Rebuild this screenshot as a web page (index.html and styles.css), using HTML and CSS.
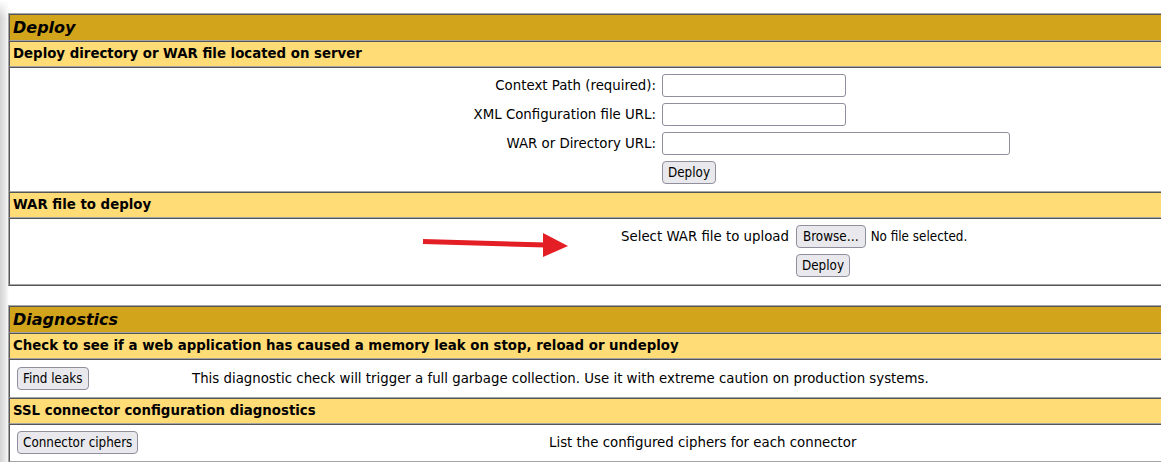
FILE: index.html
```html
<!DOCTYPE html>
<html lang="en">
<head>
<meta charset="utf-8">
<title>Manager</title>
<link rel="stylesheet" href="styles.css">
</head>
<body>
<div class="page">
  <section class="panel">
    <div class="cell title">Deploy</div>
    <div class="cell header">Deploy directory or WAR file located on server</div>
    <div class="cell body server-body">
      <form class="form-grid server-form">
        <label class="lbl">Context Path (required):</label>
        <div><input class="txt" type="text"></div>
        <label class="lbl">XML Configuration file URL:</label>
        <div><input class="txt" type="text"></div>
        <label class="lbl">WAR or Directory URL:</label>
        <div><input class="txt long" type="text"></div>
        <span></span>
        <div><button type="button" class="btn">Deploy</button></div>
      </form>
    </div>
    <div class="cell header">WAR file to deploy</div>
    <div class="cell body upload-body">
      <form class="form-grid upload-form">
        <span class="lbl">Select WAR file to upload</span>
        <div class="file"><button type="button" class="btn browse">Browse…</button><span class="nofile">No file selected.</span></div>
        <span></span>
        <div><button type="button" class="btn">Deploy</button></div>
      </form>
      <svg class="arrow" width="150" height="30" viewBox="0 0 150 30" aria-hidden="true">
        <line x1="3" y1="11.5" x2="126" y2="15" stroke="#e41e25" stroke-width="5"/>
        <polygon points="123,3 148,16 123,27" fill="#e41e25"/>
      </svg>
    </div>
  </section>

  <section class="panel">
    <div class="cell title">Diagnostics</div>
    <div class="cell header">Check to see if a web application has caused a memory leak on stop, reload or undeploy</div>
    <div class="cell row leaks">
      <div><button type="button" class="btn">Find leaks</button></div>
      <span class="desc">This diagnostic check will trigger a full garbage collection. Use it with extreme caution on production systems.</span>
    </div>
    <div class="cell header">SSL connector configuration diagnostics</div>
    <div class="cell row ciphers">
      <div><button type="button" class="btn">Connector ciphers</button></div>
      <span class="desc">List the configured ciphers for each connector</span>
    </div>
  </section>
</div>
</body>
</html>
```

FILE: styles.css
```css
html {
  background: #fff;
}

body {
  margin: 0;
  min-height: 462px;
  overflow: hidden;
  font-family: "DejaVu Sans", "Liberation Sans", sans-serif;
  color: #000;
  background:
    linear-gradient(to bottom, #fff 0, rgba(255, 255, 255, 0) 18px) 0 0 / 9px 100% no-repeat,
    linear-gradient(to right, #d3d3d3 0, #e2e2e2 4px, #f1f1f1 7px, #fff 9px) 0 0 / 9px 100% no-repeat;
}

.page {
  padding: 13px 0 0 8px;
  width: 1400px;
}

.panel {
  border: 1px solid;
  border-color: #a5a5a5 #555 #555 #a5a5a5;
  margin-bottom: 19px;
}

.cell {
  border: 1px solid;
  border-color: #555 #a5a5a5 #a5a5a5 #555;
}

.title {
  background: #d2a41c;
  font-weight: bold;
  font-style: italic;
  font-size: 16px;
  line-height: 19px;
  padding: 3px;
}

.header {
  background: #ffdc75;
  font-weight: bold;
  font-size: 13.333px;
  line-height: 18px;
  padding: 3px;
}

.body {
  position: relative;
  font-size: 13.333px;
}

.server-body {
  padding: 6px 0 7px;
}

.upload-body {
  padding: 6px 0 7px;
}

.form-grid {
  display: grid;
  align-items: center;
  row-gap: 6px;
  margin: 0;
}

.server-form {
  grid-template-columns: 646px auto;
  column-gap: 6px;
}

.upload-form {
  grid-template-columns: 779px auto;
  column-gap: 7px;
}

.lbl {
  text-align: right;
}

.txt {
  display: block;
  box-sizing: border-box;
  width: 184px;
  height: 23px;
  border: 1px solid #8f8f9d;
  border-radius: 3px;
  padding: 0 4px;
  background: #fff;
}

.txt.long {
  width: 348px;
}

.btn {
  display: block;
  box-sizing: border-box;
  height: 23px;
  padding: 0 5px;
  font-family: "DejaVu Sans Condensed", "DejaVu Sans", sans-serif;
  font-stretch: condensed;
  font-size: 13.333px;
  color: #000;
  background: #e9e9ed;
  border: 1px solid #8f8f9d;
  border-radius: 4px;
}

.btn.browse {
  padding: 0 6px;
}

.file {
  display: flex;
  align-items: center;
}

.nofile {
  margin-left: 5px;
  font-family: "DejaVu Sans Condensed", "DejaVu Sans", sans-serif;
  font-stretch: condensed;
  font-size: 13.333px;
}

.arrow {
  position: absolute;
  left: 410px;
  top: 11px;
}

.row {
  display: grid;
  align-items: center;
  font-size: 13.333px;
}

.leaks {
  grid-template-columns: 175px auto;
  padding: 7px 0 7px 7px;
}

.ciphers {
  grid-template-columns: 532px auto;
  padding: 6px 0 7px 7px;
}
```
